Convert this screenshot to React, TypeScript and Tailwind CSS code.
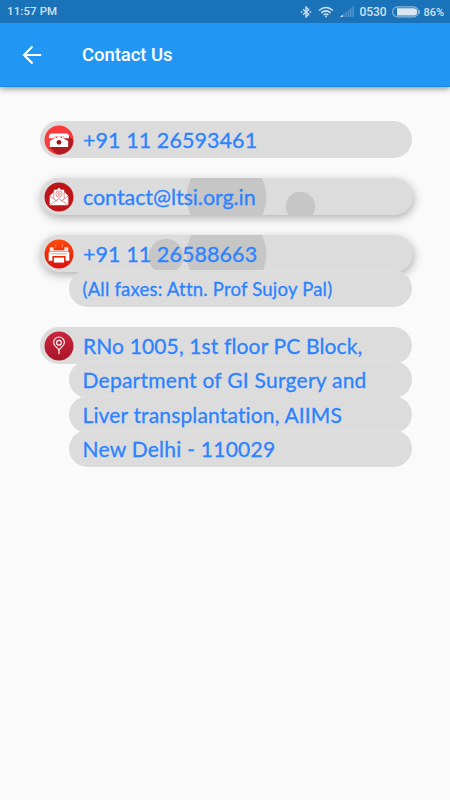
import type { ReactNode } from "react";

interface PillProps {
  children: ReactNode;
  icon?: ReactNode;
  raised?: boolean;
  className?: string;
}

function Pill({ children, icon, raised, className = "" }: PillProps) {
  return (
    <div
      className={`relative flex h-[37px] items-center rounded-full bg-[#dcdcdc] ${
        icon ? "pl-[4px]" : "ml-[29px] pl-[13.5px]"
      } ${raised ? "mr-[-1px] shadow-[1px_3px_10px_rgba(0,0,0,0.3)]" : ""} ${className}`}
    >
      {icon && <span className="relative mr-[9px] size-[30px] shrink-0">{icon}</span>}
      {children}
    </div>
  );
}

function Label({ children, className }: { children: string; className: string }) {
  return (
    <span
      className={`relative font-['Lato',sans-serif] leading-none whitespace-nowrap text-[#2b83ff] [-webkit-text-stroke:0.3px_#2b83ff] [font-variant-ligatures:none] ${className}`}
    >
      {children}
    </span>
  );
}

function PhoneIcon() {
  return (
    <svg viewBox="0 0 29 29" className="size-full">
      <defs>
        <clipPath id="phone-clip">
          <circle cx="14.5" cy="14.5" r="14" />
        </clipPath>
      </defs>
      <g clipPath="url(#phone-clip)">
        <path d="M0 0h29v29H0z" fill="#f93b3e" />
        <path d="M23.500 10l8 8v12H14l-8.500-8.500z" fill="#b21b20" />
      </g>
      <path d="M4.800 12.800v-2.400q.5-2.200 3-2.200h13.400q2.500 0 3 2.200v2.400h-4.900v-1.700H9.700v1.700z" fill="#fff" />
      <path d="M10 11h1.400v1.500h1.500V11h3.200v1.500h1.500V11H19v2l4.300 2.400v5.900H5.700v-5.900l4.300-2.400z" fill="#fff" />
      <circle cx="14.500" cy="16.700" r="2.300" fill="#a3171c" />
    </svg>
  );
}

function MailIcon() {
  return (
    <svg viewBox="0 0 29 29" className="size-full">
      <circle cx="14.500" cy="14.500" r="14" fill="#bd1518" />
      <path d="M5.500 13.500l4-4V7.500h2.800L14.500 5.500l2.200 2h2.800v2l4 4v9h-18z" fill="#fff" />
      <g fill="none" stroke="#c9494b" strokeWidth="0.6">
        <path d="M5.700 13.600l6.800 5M23.300 13.600l-6.800 5M5.800 22.200l8.700-6.200 8.700 6.200M9.500 9.500v6.500M19.500 9.500v6.500" />
        <circle cx="14.500" cy="11.500" r="3" />
        <circle cx="14.500" cy="11.500" r="1.200" />
      </g>
    </svg>
  );
}

function FaxIcon() {
  return (
    <svg viewBox="0 0 29 29" className="size-full">
      <defs>
        <linearGradient id="fax-fill" x1="0" y1="0" x2="0" y2="1">
          <stop offset="0" stopColor="#ff4808" />
          <stop offset="1" stopColor="#dc1010" />
        </linearGradient>
      </defs>
      <circle cx="14.500" cy="14.500" r="14" fill="url(#fax-fill)" />
      <path d="M11.300 5v3.500M17.700 5v3.500" stroke="#fff" strokeWidth="0.8" opacity="0.45" />
      <path d="M5.500 8h3.800v2.800h10.400V8h3.800v3.600h-18z" fill="#fff" opacity="0.85" />
      <path d="M6 12.200h17q1.500 0 1.500 1.500v7.300h-3.600v-4.500H8.100V21H4.500v-7.300q0-1.500 1.500-1.500z" fill="#fff" />
      <path d="M9.600 18h9.800v4.800H9.600z" fill="#fff" />
      <path d="M6.500 14.300h16" stroke="#ee5a3a" strokeWidth="0.6" />
    </svg>
  );
}

function PinIcon() {
  return (
    <svg viewBox="0 0 29 29" className="size-full">
      <defs>
        <linearGradient id="pin-fill" x1="0" y1="0" x2="0" y2="1">
          <stop offset="0" stopColor="#cb2440" />
          <stop offset="1" stopColor="#aa1628" />
        </linearGradient>
      </defs>
      <circle cx="14.500" cy="14.500" r="14" fill="url(#pin-fill)" />
      <g fill="none" stroke="#fff" strokeWidth="1.100" strokeLinecap="round" strokeLinejoin="round">
        <path d="M14.500 18.800c-1-2.600-5.200-4.300-5.200-7.800a5.200 5.200 0 0 1 10.400 0c0 3.500-4.200 5.200-5.200 7.800zM14.500 18.500v3.500" />
        <circle cx="14.500" cy="11.300" r="2.300" />
      </g>
    </svg>
  );
}

// Touch ripples, cut off by the row they sit in
function Ripples({ children }: { children: ReactNode }) {
  return (
    <svg className="absolute inset-0 h-full w-full" fill="#c6c6c6">
      {children}
    </svg>
  );
}

function StatusBar() {
  return (
    <div className="flex h-[23px] items-center bg-[#1a72b9] pr-[6px] pl-[7px] font-['Roboto',sans-serif] text-[11.500px] leading-none font-medium text-[#d0e2f1]">
      <span className="pt-px tracking-[0.1px]">11:57 PM</span>
      <svg viewBox="0 0 12 12" className="ml-auto size-[12px]" fill="none" stroke="currentColor" strokeWidth="1.300">
        <path d="M3 3.300l5.700 5L6 11V1l2.700 2.700-5.700 5" />
        <path d="M.8 6h1.600M9.600 6h1.600" />
      </svg>
      <svg viewBox="0 0 16 12" className="ml-[6px] h-[12px] w-[16px]" fill="none" stroke="currentColor" strokeWidth="1.500">
        <path d="M1 4.500q7-6 14 0M3.300 6.900q4.700-4 9.400 0M5.600 9q2.400-2 4.800 0" />
        <circle cx="8" cy="10.500" r="0.900" fill="currentColor" stroke="none" />
      </svg>
      <svg viewBox="0 0 14 11" className="ml-[6px] h-[11px] w-[14px]" fill="#4b91ca">
        <path d="M0 11l2.600-2.400V11z" fill="#e2eef7" />
        <path d="M3.200 7.700h1.600V11H3.200zM5.500 6h1.600v5H5.500zM7.800 4h1.600v7H7.800zM10 2.200h1.600V11H10zM12.300.5H14V11h-1.700z" />
      </svg>
      <span className="ml-[6px] pt-px text-[12px] tracking-[-0.1px]">0530</span>
      <svg viewBox="0 0 28 12" className="ml-[6px] h-[12px] w-[28px]">
        <rect x="0.600" y="0.900" width="25.800" height="10" rx="5" fill="none" stroke="#8db9dc" strokeWidth="1.100" />
        <path d="M27.300 4v4" stroke="#8db9dc" strokeWidth="1.200" />
        <path d="M5 2.200h16.500a3.700 3.700 0 0 1 0 7.400H5z" fill="#d8e7f3" />
      </svg>
      <span className="ml-[3px] pt-px text-[11px]">86%</span>
    </div>
  );
}

export default function App() {
  return (
    <div className="h-[800px] w-[450px] overflow-hidden bg-[#fafafa]">
      <header className="relative shadow-[0_2px_6px_rgba(0,0,0,0.4)]">
        <StatusBar />
        <div className="flex h-[64px] items-center border-b border-[#1689ef] bg-[#2296f3] pl-[22px] text-white">
          <svg viewBox="0 0 20 20" className="size-[20px]" fill="none" stroke="currentColor" strokeWidth="2.200">
            <path d="M19.200 10H2.400M10.500 1.500L2 10l8.500 8.500" />
          </svg>
          <h1 className="ml-[40px] pt-[2px] font-['Roboto',sans-serif] text-[18.500px] font-medium tracking-[-0.05px]">
            Contact Us
          </h1>
        </div>
      </header>

      <main className="pt-[34px] pr-[38px] pl-[40px]">
        <Pill icon={<PhoneIcon />}>
          <Label className="top-px text-[21.500px] tracking-[0.07px]">+91 11 26593461</Label>
        </Pill>

        <Pill icon={<MailIcon />} raised className="mt-[20px]">
          <Ripples>
            <circle cx="186.500" cy="19" r="40" />
            <circle cx="260.500" cy="28.500" r="14.700" />
          </Ripples>
          <Label className="top-px text-[21.500px] tracking-[-0.07px]">contact@ltsi.org.in</Label>
        </Pill>

        <Pill icon={<FaxIcon />} raised className="mt-[20px]">
          <Ripples>
            <circle cx="126" cy="21.500" r="17.500" />
            <circle cx="186.500" cy="19" r="40" />
          </Ripples>
          <Label className="top-px text-[21.500px] tracking-[0.07px]">+91 11 26588663</Label>
        </Pill>
        <Pill className="mt-[-2px] border-t border-[#e0e0e0]">
          <Label className="text-[18.500px] tracking-[0.21px]">(All faxes: Attn. Prof Sujoy Pal)</Label>
        </Pill>

        <address className="mt-[20px] not-italic">
          <Pill icon={<PinIcon />}>
            <Label className="text-[21px] tracking-[0.13px]">RNo 1005, 1st floor PC Block,</Label>
          </Pill>
          <Pill className="mt-[-3px] border-t border-[#e0e0e0]">
            <Label className="top-[-1px] text-[21px] tracking-[0.25px]">Department of GI Surgery and</Label>
          </Pill>
          <Pill className="mt-[-2px] border-t border-[#e0e0e0]">
            <Label className="top-[-1px] text-[21px] tracking-[0.15px]">Liver transplantation, AIIMS</Label>
          </Pill>
          <Pill className="mt-[-3px] border-t border-[#e0e0e0]">
            <Label className="top-[-1px] text-[21px] tracking-[0.25px]">New Delhi - 110029</Label>
          </Pill>
        </address>
      </main>
    </div>
  );
}
